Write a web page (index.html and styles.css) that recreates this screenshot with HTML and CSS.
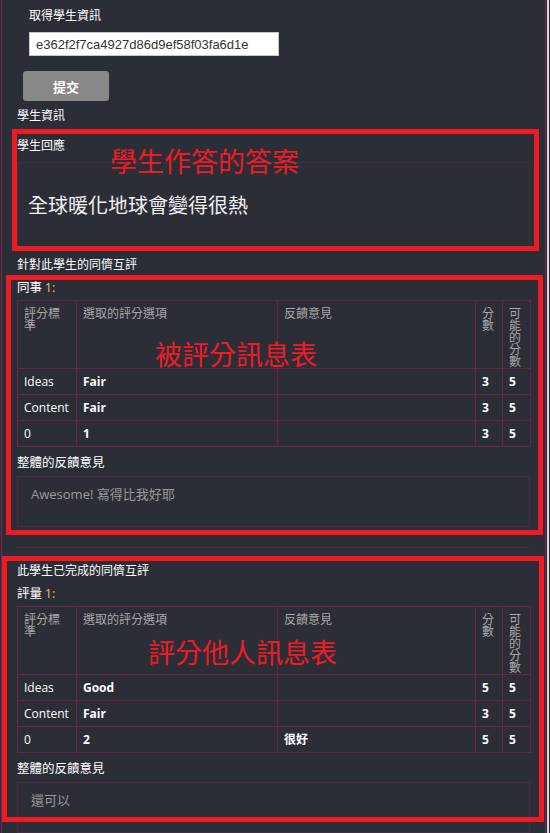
FILE: index.html
```html
<!DOCTYPE html>
<html lang="zh-Hant">
<head>
<meta charset="utf-8">
<title>取得學生資訊</title>
<link rel="stylesheet" href="styles.css">
</head>
<body>
<div class="page">
  <div class="fetch-form">
    <div class="fetch-title">取得學生資訊</div>
    <input class="fetch-input" type="text" value="e362f2f7ca4927d86d9ef58f03fa6d1e">
    <button class="fetch-btn" type="button">提交</button>
  </div>

  <div class="info-title">學生資訊</div>

  <div class="response-label">學生回應</div>
  <div class="response-box">全球暖化地球會變得很熱</div>

  <div class="peer-heading">針對此學生的同儕互評</div>
  <div class="assess-title">同事 <span class="num">1:</span></div>
  <table class="rubric">
    <colgroup>
      <col class="c-crit"><col class="c-opt"><col class="c-fb"><col class="c-pts"><col class="c-max">
    </colgroup>
    <thead>
      <tr><th>評分標準</th><th>選取的評分選項</th><th>反饋意見</th><th>分數</th><th>可能的分數</th></tr>
    </thead>
    <tbody>
      <tr><td class="crit">Ideas</td><td>Fair</td><td></td><td>3</td><td>5</td></tr>
      <tr><td class="crit">Content</td><td>Fair</td><td></td><td>3</td><td>5</td></tr>
      <tr><td class="crit">0</td><td>1</td><td></td><td>3</td><td>5</td></tr>
    </tbody>
  </table>
  <div class="overall-label">整體的反饋意見</div>
  <div class="overall-box">Awesome! 寫得比我好耶</div>

  <hr class="divider">

  <div class="peer-heading second">此學生已完成的同儕互評</div>
  <div class="assess-title">評量 <span class="num">1:</span></div>
  <table class="rubric">
    <colgroup>
      <col class="c-crit"><col class="c-opt"><col class="c-fb"><col class="c-pts"><col class="c-max">
    </colgroup>
    <thead>
      <tr><th>評分標準</th><th>選取的評分選項</th><th>反饋意見</th><th>分數</th><th>可能的分數</th></tr>
    </thead>
    <tbody>
      <tr><td class="crit">Ideas</td><td>Good</td><td></td><td>5</td><td>5</td></tr>
      <tr><td class="crit">Content</td><td>Fair</td><td></td><td>3</td><td>5</td></tr>
      <tr><td class="crit">0</td><td>2</td><td>很好</td><td>5</td><td>5</td></tr>
    </tbody>
  </table>
  <div class="overall-label">整體的反饋意見</div>
  <div class="overall-box">還可以</div>
</div>
<div class="scroll-edge"></div>

<div class="mark mark-1"></div>
<div class="mark mark-2"></div>
<div class="mark mark-3"></div>
<div class="note note-1">學生作答的答案</div>
<div class="note note-2">被評分訊息表</div>
<div class="note note-3">評分他人訊息表</div>
</body>
</html>
```
FILE: styles.css
```css
html, body {
  margin: 0;
  padding: 0;
}
body {
  position: relative;
  display: flex;
  width: 550px;
  min-height: 833px;
  overflow: hidden;
  background: #2b2e37;
  color: #ffffff;
  font-family: "Noto Sans CJK TC", "Open Sans", sans-serif;
  font-size: 12px;
}
.page {
  box-sizing: border-box;
  width: 545px;
  margin-left: 1px;
  border-left: 1px solid #7a2550;
  border-right: 1px solid #7a2550;
  padding: 7px 15px 0 15px;
  min-height: 833px;
}
.scroll-edge {
  width: 2px;
  margin-left: 1px;
  background: #d9d9d9;
}

/* fetch form */
.fetch-title {
  margin-left: 12px;
  height: 16px;
  line-height: 16px;
  font-size: 12px;
}
.fetch-input {
  display: block;
  box-sizing: border-box;
  width: 250px;
  height: 24px;
  margin: 9px 0 0 12px;
  padding: 0 6px;
  border: 1px solid #c8c8c8;
  background: #ffffff;
  color: #333333;
  font-family: "Liberation Sans", Arial, sans-serif;
  font-size: 13px;
  outline: none;
}
.fetch-btn {
  display: block;
  width: 86px;
  height: 30px;
  margin: 15px 0 0 6px;
  border: none;
  border-radius: 3px;
  background: #888888;
  color: #ffffff;
  font-family: "Noto Sans CJK TC", sans-serif;
  font-size: 13px;
  font-weight: 700;
}

.info-title {
  margin-top: 6px;
  height: 16px;
  line-height: 16px;
}
.response-label {
  margin-top: 14px;
  height: 16px;
  line-height: 16px;
}
.response-box {
  box-sizing: border-box;
  height: 85px;
  margin-top: 9px;
  padding: 28px 10px 0 10px;
  border: 1px solid #3c2f3e;
  font-size: 20px;
  line-height: 28px;
  color: #f0f0f0;
}

.peer-heading {
  margin-top: 9px;
  height: 16px;
  line-height: 16px;
}
.peer-heading.second {
  margin-top: 14px;
}
.assess-title {
  margin-top: 7px;
  height: 16px;
  line-height: 16px;
  font-size: 12.5px;
}
.assess-title .num {
  color: #e3c47c;
  font-family: "Open Sans", sans-serif;
  line-height: 16px;
}

.rubric {
  width: 513px;
  margin-top: 5px;
  border-collapse: collapse;
  table-layout: fixed;
}
.c-crit { width: 59px; }
.c-opt { width: 201px; }
.c-fb { width: 198px; }
.c-pts { width: 27px; }
.c-max { width: 28px; }
.rubric th,
.rubric td {
  border: 1px solid #6a2446;
  padding: 0 6px;
  text-align: left;
  overflow: hidden;
}
.rubric thead tr {
  height: 68px;
}
.rubric th {
  vertical-align: top;
  padding-top: 6px;
  font-weight: 400;
  font-size: 12px;
  line-height: 12px;
  color: #a8a8a8;
}
.rubric tbody tr {
  height: 26px;
}
.rubric td {
  vertical-align: middle;
  font-family: "Open Sans", "Noto Sans CJK TC", sans-serif;
  font-size: 12px;
  font-weight: 700;
  line-height: 16px;
  color: #ffffff;
}
.rubric td.crit {
  font-weight: 400;
}

.overall-label {
  margin-top: 7px;
  height: 16px;
  line-height: 16px;
  font-size: 12.5px;
}
.overall-box {
  box-sizing: border-box;
  height: 51px;
  margin-top: 6px;
  padding: 8px 13px 0 13px;
  border: 1px solid #4c2842;
  font-family: "Open Sans", "Noto Sans CJK TC", sans-serif;
  font-size: 13px;
  line-height: 18px;
  color: #9a9a9a;
}

.divider {
  height: 0;
  margin: 20px 0 0 0;
  border: none;
  border-top: 1px solid #4c2842;
}

/* red annotation overlays */
.mark {
  position: absolute;
  box-sizing: border-box;
  border: 5px solid #ed1c24;
  pointer-events: none;
}
.mark-1 { left: 12px; top: 129px; width: 527px; height: 122px; }
.mark-2 { left: 6px; top: 275px; width: 537px; height: 260px; }
.mark-3 { left: 2px; top: 556px; width: 542px; height: 266px; }
.note {
  position: absolute;
  color: #ed1c24;
  font-family: "Noto Sans CJK TC", sans-serif;
  font-size: 27px;
  line-height: 30px;
  white-space: nowrap;
}
.note-1 { left: 110px; top: 146px; }
.note-2 { left: 155px; top: 339px; }
.note-3 { left: 148px; top: 637px; }
```
